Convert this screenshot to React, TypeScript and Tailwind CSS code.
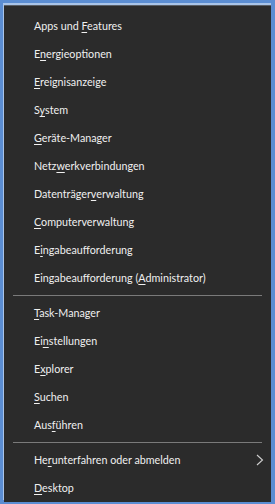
import React from "react";

type Item = { pre: string; key: string; post: string; arrow?: boolean };

const group1: Item[] = [
  { pre: "Apps und ", key: "F", post: "eatures" },
  { pre: "E", key: "n", post: "ergieoptionen" },
  { pre: "", key: "E", post: "reignisanzeige" },
  { pre: "S", key: "y", post: "stem" },
  { pre: "", key: "G", post: "eräte-Manager" },
  { pre: "Netz", key: "w", post: "erkverbindungen" },
  { pre: "Datenträger", key: "v", post: "erwaltung" },
  { pre: "", key: "C", post: "omputerverwaltung" },
  { pre: "E", key: "i", post: "ngabeaufforderung" },
  { pre: "Eingabeaufforderung (", key: "A", post: "dministrator)" },
];

const group2: Item[] = [
  { pre: "", key: "T", post: "ask-Manager" },
  { pre: "Ei", key: "n", post: "stellungen" },
  { pre: "E", key: "x", post: "plorer" },
  { pre: "", key: "S", post: "uchen" },
  { pre: "Aus", key: "f", post: "ühren" },
];

const group3: Item[] = [
  { pre: "He", key: "r", post: "unterfahren oder abmelden", arrow: true },
  { pre: "", key: "D", post: "esktop" },
];

function Row({ item }: { item: Item }) {
  return (
    <div className="flex h-[28px] items-center justify-between pl-[30px] pr-[7px]">
      <span className="whitespace-pre">
        {item.pre}
        <span className="underline underline-offset-2 decoration-1">{item.key}</span>
        {item.post}
      </span>
      {item.arrow && (
        <svg width="8" height="12" viewBox="0 0 8 12" fill="none">
          <path d="M1 1l5.5 5L1 11" stroke="#d0d0d0" strokeWidth="1.1" />
        </svg>
      )}
    </div>
  );
}

function Sep() {
  return (
    <div className="flex h-[7px] items-center px-[9px]">
      <div className="h-px w-full bg-[#7a7a7a]" />
    </div>
  );
}

export default function App() {
  return (
    <div className="h-[504px] w-[275px] bg-[#5b8dd2] pl-[3px] pr-[4px] pt-[3px] pb-[4px]">
      <div className="flex h-full w-full flex-col border-l border-t-2 border-[#a9c4e9] border-t-[#a9c4e9]">
        <div
          className="flex flex-1 flex-col bg-[#2b2b2b] pt-[6px] text-[10.75px] text-[#f0f0f0] border-t border-[#5a5f66]"
          style={{ fontFamily: 'Lato, "Noto Sans", sans-serif' }}
        >
          {group1.map((it, i) => (
            <Row key={i} item={it} />
          ))}
          <Sep />
          {group2.map((it, i) => (
            <Row key={i} item={it} />
          ))}
          <Sep />
          {group3.map((it, i) => (
            <Row key={i} item={it} />
          ))}
        </div>
      </div>
    </div>
  );
}
